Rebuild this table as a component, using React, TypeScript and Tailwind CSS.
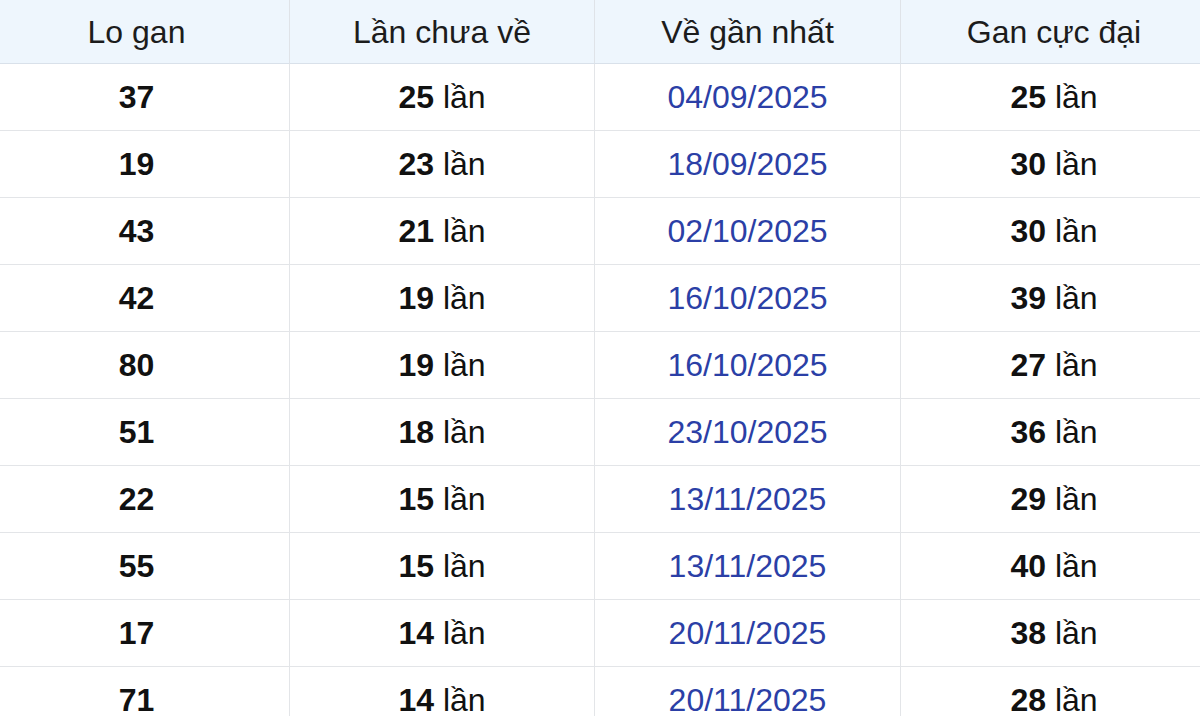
import React from "react";

const rows: [string, string, string, string][] = [
  ["37", "25", "04/09/2025", "25"],
  ["19", "23", "18/09/2025", "30"],
  ["43", "21", "02/10/2025", "30"],
  ["42", "19", "16/10/2025", "39"],
  ["80", "19", "16/10/2025", "27"],
  ["51", "18", "23/10/2025", "36"],
  ["22", "15", "13/11/2025", "29"],
  ["55", "15", "13/11/2025", "40"],
  ["17", "14", "20/11/2025", "38"],
  ["71", "14", "20/11/2025", "28"],
];

const cell = "flex items-center justify-center border-b border-[#e3e5e8]";
const pads = ["pr-[16px]", "", "", "pl-[7px]"];

export default function App() {
  return (
    <div
      className="w-[1200px] h-[716px] overflow-hidden bg-white text-[32px] text-[#111]"
      style={{ fontFamily: '"Liberation Sans", Arial, sans-serif' }}
    >
      <div className="grid grid-cols-[290px_305px_306px_299px]">
        {["Lo gan", "Lần chưa về", "Về gần nhất", "Gan cực đại"].map((h, i) => (
          <div
            key={h}
            className={`${cell} ${pads[i]} h-[64px] bg-[#eef6fd] text-[#1c1c1c] border-b-[#d9e1ea] ${i < 3 ? "border-r border-r-[#dfe3e8]" : ""}`}
          >
            {h}
          </div>
        ))}
        {rows.map((r, ri) => (
          <React.Fragment key={ri}>
            <div className={`${cell} pr-[16px] h-[67px] border-r font-bold`}>{r[0]}</div>
            <div className={`${cell} h-[67px] border-r`}>
              <span className="font-bold">{r[1]}</span>
              <span>&nbsp;lần</span>
            </div>
            <div className={`${cell} h-[67px] border-r text-[#2b3fa6]`}>{r[2]}</div>
            <div className={`${cell} pl-[7px] h-[67px]`}>
              <span className="font-bold">{r[3]}</span>
              <span>&nbsp;lần</span>
            </div>
          </React.Fragment>
        ))}
      </div>
    </div>
  );
}
